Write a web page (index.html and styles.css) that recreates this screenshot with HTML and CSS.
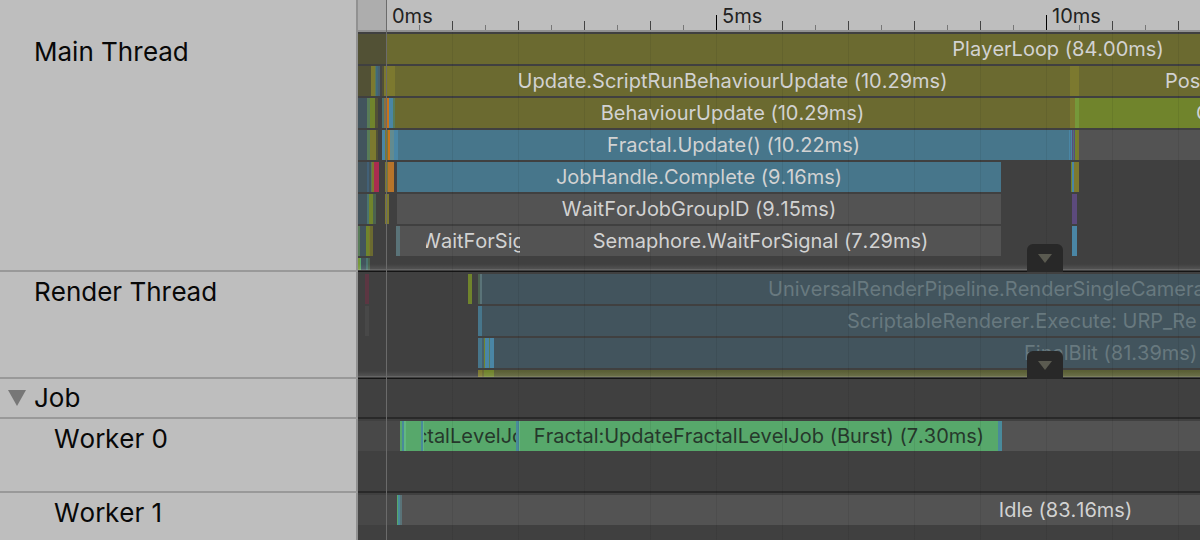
FILE: index.html
```html
<!DOCTYPE html>
<html lang="en">
<head>
<meta charset="utf-8">
<title>CPU Timeline</title>
<link rel="stylesheet" href="styles.css">
</head>
<body>
<main class="profiler">
  <div class="names-head"></div>
  <div class="ruler">
    <span class="before"></span>
    <span class="mark">0ms</span><span class="mark">5ms</span><span class="mark">10ms</span>
  </div>

  <div class="name">Main Thread</div>
  <section class="track main-thread fade">
    <div class="row"><i class="dim" style="width:28px"></i><i class="olive" style="width:1344px">PlayerLoop (84.00ms)</i></div>
    <div class="row"><i class="dim" style="width:13px"></i><i class="gold" style="width:4px"></i><i class="moss" style="width:1px"></i><i class="sea" style="width:2px"></i><i class="steel" style="width:2px"></i><i class="soot" style="width:2px"></i><i class="dim" style="width:2px"></i><i class="gold" style="width:11px"></i><i class="olive" style="width:675px">Update.ScriptRunBehaviourUpdate (10.29ms)</i><i class="gold" style="width:9px"></i><i class="olive" style="width:86px"></i><i class="olive rest">Post</i></div>
    <div class="row"><i class="slate" style="width:9px"></i><i class="moss" style="width:3px"></i><i class="lime" style="width:5px"></i><i class="dim" style="width:3px"></i><i style="width:4px"></i><i class="teal" style="width:2px"></i><i class="rust" style="width:2px"></i><i class="orange" style="width:3px"></i><i class="sky" style="width:4px"></i><i class="moss" style="width:2px"></i><i class="olive" style="width:675px">BehaviourUpdate (10.29ms)</i><i class="gold" style="width:5px"></i><i class="leaf" style="width:4px"></i><i class="lime" style="width:117px"></i><i class="lime rest">C</i></div>
    <div class="row"><i class="slate" style="width:9px"></i><i class="moss" style="width:3px"></i><i class="gold" style="width:6px"></i><i class="dim" style="width:2px"></i><i style="width:4px"></i><i class="sky" style="width:3px"></i><i class="gold" style="width:3px"></i><i class="orange" style="width:2px"></i><i class="mist" style="width:4px"></i><i class="sky" style="width:4px"></i><i class="blue" style="width:671px">Fractal.Update() (10.22ms)</i><i class="sky" style="width:1px"></i><i class="blue" style="width:1px"></i><i class="sky" style="width:1px"></i><i class="purple" style="width:1px"></i><i class="teal" style="width:1px"></i><i class="purple" style="width:1px"></i><i class="lime" style="width:2px"></i><i class="gold" style="width:2px"></i><i class="grey rest"></i></div>
    <div class="row"><i class="slate" style="width:9px"></i><i class="deep" style="width:2px"></i><i class="slate" style="width:2px"></i><i class="moss" style="width:1px"></i><i class="gold" style="width:2px"></i><i class="crimson" style="width:5px"></i><i style="width:6px"></i><i class="gold" style="width:3px"></i><i class="amber" style="width:6px"></i><i style="width:3px"></i><i class="blue" style="width:604px">JobHandle.Complete (9.16ms)</i><i style="width:70px"></i><i class="lime" style="width:1px"></i><i class="sky" style="width:2px"></i><i class="gold" style="width:5px"></i></div>
    <div class="row"><i class="slate" style="width:9px"></i><i class="teal" style="width:2px"></i><i class="lime" style="width:4px"></i><i class="pine" style="width:3px"></i><i style="width:9px"></i><i class="gold" style="width:4px"></i><i style="width:8px"></i><i class="grey" style="width:604px">WaitForJobGroupID (9.15ms)</i><i style="width:71px"></i><i class="purple" style="width:5px"></i></div>
    <div class="row"><i class="moss" style="width:2px"></i><i class="slate" style="width:6px"></i><i class="lime" style="width:3px"></i><i class="gold" style="width:1px"></i><i class="olive" style="width:3px"></i><i style="width:23px"></i><i class="haze" style="width:4px"></i><i class="grey" style="width:26px"></i><i class="grey" style="width:94px">WaitForSig</i><i class="grey" style="width:481px">Semaphore.WaitForSignal (7.29ms)</i><i style="width:71px"></i><i class="sky" style="width:5px"></i></div>
    <div class="row"><i class="leaf" style="width:2px"></i><i class="green" style="width:1px"></i><i class="slate" style="width:5px"></i><i class="teal" style="width:2px"></i><i class="pine" style="width:2px"></i></div>
    <button class="expand" aria-label="Expand Main Thread"><svg width="14" height="9"><path d="M0 0h14L7 9z"/></svg></button>
  </section>

  <div class="name">Render Thread</div>
  <section class="track render-thread fade">
    <div class="row"><i style="width:7px"></i><i class="wine" style="width:4px"></i><i style="width:99px"></i><i class="lime" style="width:4px"></i><i style="width:6px"></i><i class="pine" style="width:2px"></i><i class="haze" style="width:2px"></i><i class="slate" style="width:286px"></i><i class="slate rest">UniversalRenderPipeline.RenderSingleCamera</i></div>
    <div class="row"><i style="width:7px"></i><i class="ash" style="width:4px"></i><i style="width:109px"></i><i class="blue" style="width:4px"></i><i class="slate" style="width:365px"></i><i class="slate rest">ScriptableRenderer.Execute: URP_Re</i></div>
    <div class="row"><i style="width:120px"></i><i class="blue" style="width:4px"></i><i class="steel" style="width:2px"></i><i class="lime" style="width:1px"></i><i class="sky" style="width:4px"></i><i class="moss" style="width:1px"></i><i class="sky" style="width:4px"></i><i class="slate" style="width:530px"></i><i class="slate rest">FinalBlit (81.39ms)</i></div>
    <div class="row"><i style="width:120px"></i><i class="gold" style="width:4px"></i><i class="olive" style="width:2px"></i><i class="lime" style="width:10px"></i><i class="fern rest"></i></div>
    <button class="expand" aria-label="Expand Render Thread"><svg width="14" height="9"><path d="M0 0h14L7 9z"/></svg></button>
  </section>

  <button class="name group" aria-expanded="true"><svg width="18" height="16"><path d="M0 0h18L9 16z"/></svg>Job</button>
  <section class="track job"></section>

  <div class="name worker">Worker 0</div>
  <section class="track thread">
    <div class="row"><i class="ash" style="width:42px"></i><i class="green" style="width:2px"></i><i class="marine" style="width:2px"></i><i class="mint" style="width:2px"></i><i class="green" style="width:15px"></i><i class="marine" style="width:2px"></i><i class="mint" style="width:1px"></i><i class="green" style="width:92px">ctalLevelJo</i><i class="marine" style="width:3px"></i><i class="mint" style="width:1px"></i><i class="green" style="width:478px">Fractal:UpdateFractalLevelJob (Burst) (7.30ms)</i><i class="marine" style="width:4px"></i><i class="grey rest"></i></div>
  </section>

  <div class="name worker">Worker 1</div>
  <section class="track thread">
    <div class="row"><i class="ash" style="width:39px"></i><i class="green" style="width:1px"></i><i class="marine" style="width:2px"></i><i class="haze" style="width:2px"></i><i class="grey" style="width:1327px">Idle (83.16ms)</i></div>
  </section>
  <div class="grid-lines"></div>
</main>
</body>
</html>
```
FILE: styles.css
```css
* { box-sizing: border-box; }

body {
  margin: 0;
  background: #404040;
  font-family: Inter, "Liberation Sans", sans-serif;
  font-kerning: none;
  font-feature-settings: "calt" 0;
}

.profiler {
  position: relative;
  display: grid;
  grid-template-columns: 358px minmax(0, 1fr);
  min-height: 100vh;
  max-height: 100vh;
  grid-template-rows: auto auto auto auto auto 1fr;
  overflow: hidden;
}

/* thread names */
.names-head,
.name {
  background: #bebebe;
  border: 0 solid #919191;
  border-right-width: 2px;
}

.name {
  border-bottom: 2px solid #999;
  padding: 0 0 0 34px;
  font-family: inherit;
  font-size: 26px;
  line-height: 40px;
  font-kerning: none;
  color: #080808;
  text-align: left;
}

.name.worker { padding-left: 54px; }

.name.group {
  display: flex;
  align-items: center;
  gap: 8px;
  padding-left: 8px;
  line-height: 38px;
}

.group svg { fill: #777; }

/* time ruler: 66px per millisecond */
.ruler {
  display: flex;
  height: 32px;
  overflow: hidden;
  border-bottom: 2px solid #919191;
  background: #bebebe;
}

.before {
  flex: none;
  width: 28px;
  background: #adadad;
}

.mark {
  flex: none;
  width: 330px;
  padding-left: 6px;
  font-size: 20px;
  line-height: 32px;
  color: #222;
  background:
    linear-gradient(#000, #000) 0 100% / 1px 15px no-repeat,
    repeating-linear-gradient(90deg, #444 0 1px, transparent 1px 66px) 0 100% / 100% 9px no-repeat,
    repeating-linear-gradient(90deg, transparent 0 33px, #777 33px 34px, transparent 34px 66px) 0 100% / 100% 5px no-repeat;
}

/* tracks */
.track {
  position: relative;
  display: flex;
  flex-direction: column;
  gap: 2px;
  overflow: hidden;
  padding-top: 2px;
  background: #404040;
}

.main-thread { height: 240px; }
.render-thread { height: 107px; }
.job { height: 40px; border-bottom: 2px solid #292929; }
.thread { height: 74px; border-bottom: 2px solid #292929; }

.fade::after {
  content: "";
  position: absolute;
  inset: auto 0 0;
  height: 8px;
  background: linear-gradient(transparent, #ffffff18 5px, #ffffff33 5px 6px, #404040 6px 7px, #151515 7px);
}

.row {
  display: flex;
  flex: none;
  height: 30px;
}

.row i {
  display: flex;
  flex: none;
  justify-content: center;
  overflow: hidden;
  font-size: 20px;
  font-style: normal;
  line-height: 30px;
  white-space: nowrap;
  color: #d2d2d2;
}

.render-thread .row i { color: #68797f; }

.row .rest {
  flex: 1 0 0;
  min-width: 0;
  justify-content: flex-start;
}

.row .green { background: #57a86b; color: #26382b; }
.dim { background: #525135; }
.olive { background: #6b6a30; }
.gold { background: #7c792f; }
.lime { background: #70842c; }
.leaf { background: #76983a; }
.moss { background: #587b58; }
.pine { background: #4b624f; }
.fern { background: #5a5f35; }
.teal { background: #4b7470; }
.mist { background: #628b90; }
.haze { background: #5a7378; }
.sky { background: #4a86a5; }
.blue { background: #47768b; }
.sea { background: #41687a; }
.steel { background: #48606b; }
.deep { background: #426077; }
.slate { background: #42545d; }
.marine { background: #498a9b; }
.mint { background: #62b780; }
.soot { background: #444; }
.ash { background: #484848; }
.grey { background: #535353; }
.rust { background: #8a7040; }
.orange { background: #c8741c; }
.amber { background: #b8742a; }
.crimson { background: #aa2c50; }
.wine { background: #5c3642; }
.purple { background: #5c4a7c; }

/* tab that expands a clipped track */
.expand {
  position: absolute;
  z-index: 1;
  right: 137px;
  bottom: 0;
  display: grid;
  place-items: center;
  width: 36px;
  height: 28px;
  border: 0;
  border-radius: 6px 6px 0 0;
  padding: 0;
  background: #282828;
}

.expand svg { fill: #5a5a50; }

/* millisecond lines across all tracks */
.grid-lines {
  position: absolute;
  inset: 0 0 0 386px;
  pointer-events: none;
  background:
    linear-gradient(#6b6b6b, #6b6b6b) 0 0 / 1px 100% no-repeat,
    repeating-linear-gradient(90deg, #00000012 0 1px, transparent 1px 66px) 0 32px no-repeat;
}
```
